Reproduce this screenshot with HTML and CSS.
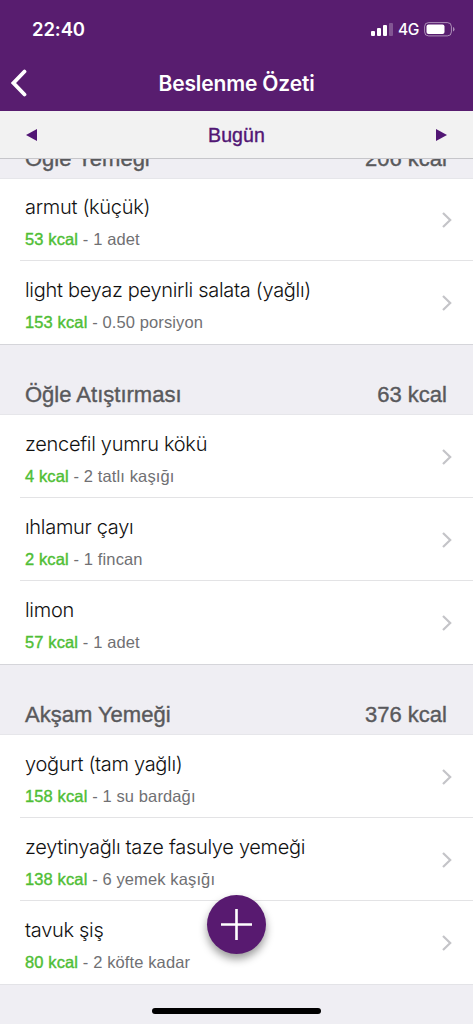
FILE: index.html
```html
<!DOCTYPE html>
<html lang="tr">
<head>
<meta charset="utf-8">
<title>Beslenme Özeti</title>
<link rel="stylesheet" href="styles.css">
</head>
<body>
<svg class="defs" width="0" height="0"><symbol id="chevron" viewBox="0 0 10 16"><path d="M1 1L8.2 8L1 15" fill="none" stroke="#c4c4c8" stroke-width="2.2"/></symbol></svg>
<div class="screen">
  <header class="top">
    <div class="status">
      <span class="time">22:40</span>
      <div class="indicators">
        <svg width="22" height="13" viewBox="0 0 22 13"><g fill="#fff"><rect x="0" y="8" width="4" height="5" rx="1"/><rect x="6" y="5" width="4" height="8" rx="1"/><rect x="12" y="2" width="4" height="11" rx="1"/><rect x="18" y="0" width="4" height="13" rx="1" opacity=".25"/></g></svg>
        <span class="network">4G</span>
        <svg width="31" height="15" viewBox="0 0 31 15"><rect x=".6" y=".6" width="26.8" height="13.3" rx="4" fill="none" stroke="#fff" stroke-opacity=".5"/><rect x="2.5" y="2.4" width="18" height="9.7" rx="2" fill="#fff"/><path d="M29 5q1.5.6 1.5 2.3T29 9.6z" fill="#fff" fill-opacity=".5"/></svg>
      </div>
    </div>
    <div class="nav">
      <svg class="back" width="16" height="28" viewBox="0 0 16 28"><path d="M13.5 2.5L2.5 14L13.5 25.5" fill="none" stroke="#fff" stroke-width="3.8" stroke-linecap="round"/></svg>
      <h1>Beslenme Özeti</h1>
    </div>
  </header>
  <div class="day">
    <svg width="12" height="12"><path d="M0 6L11 0V12z" fill="#511674"/></svg>
    <span>Bugün</span>
    <svg width="12" height="12"><path d="M12 6L1 0V12z" fill="#511674"/></svg>
  </div>
  <main class="list">
    <section>
      <h2 class="meal clipped"><span>Öğle Yemeği</span><span>206 kcal</span></h2>
      <div class="food"><div><p class="name">armut (küçük)</p><p class="info"><b>53 kcal</b> - 1 adet</p></div><svg class="go"><use href="#chevron"/></svg></div>
      <div class="food"><div><p class="name">light beyaz peynirli salata (yağlı)</p><p class="info"><b>153 kcal</b> - 0.50 porsiyon</p></div><svg class="go"><use href="#chevron"/></svg></div>
    </section>
    <section>
      <h2 class="meal"><span>Öğle Atıştırması</span><span>63 kcal</span></h2>
      <div class="food"><div><p class="name">zencefil yumru kökü</p><p class="info"><b>4 kcal</b> - 2 tatlı kaşığı</p></div><svg class="go"><use href="#chevron"/></svg></div>
      <div class="food"><div><p class="name">ıhlamur çayı</p><p class="info"><b>2 kcal</b> - 1 fincan</p></div><svg class="go"><use href="#chevron"/></svg></div>
      <div class="food"><div><p class="name">limon</p><p class="info"><b>57 kcal</b> - 1 adet</p></div><svg class="go"><use href="#chevron"/></svg></div>
    </section>
    <section>
      <h2 class="meal"><span>Akşam Yemeği</span><span>376 kcal</span></h2>
      <div class="food"><div><p class="name">yoğurt (tam yağlı)</p><p class="info"><b>158 kcal</b> - 1 su bardağı</p></div><svg class="go"><use href="#chevron"/></svg></div>
      <div class="food"><div><p class="name">zeytinyağlı taze fasulye yemeği</p><p class="info"><b>138 kcal</b> - 6 yemek kaşığı</p></div><svg class="go"><use href="#chevron"/></svg></div>
      <div class="food"><div><p class="name">tavuk şiş</p><p class="info"><b>80 kcal</b> - 2 köfte kadar</p></div><svg class="go"><use href="#chevron"/></svg></div>
    </section>
  </main>
  <footer class="bottom"><span class="home"></span></footer>
  <button class="add" aria-label="Ekle"><svg width="31" height="31"><path d="M15.5 0V31M0 15.5H31" stroke="#fff" stroke-width="2.6"/></svg></button>
</div>
</body>
</html>
```
FILE: styles.css
```css
* { box-sizing: border-box; }
body, h1, h2, p { margin: 0; }
body { font-family: "Liberation Sans", Arial, sans-serif; background: #efeef3; }
svg { display: block; flex: none; }
.defs { position: absolute; }
.screen { position: relative; display: flex; flex-direction: column; height: 1024px; overflow: hidden; }

.top { height: 111px; background: #581d6f; color: #fff; font-family: Inter, sans-serif; }
.status { display: flex; justify-content: space-between; align-items: center; height: 58px; padding: 0 18px 0 32px; }
.time { font-size: 18.5px; font-weight: 600; letter-spacing: -.1px; }
.indicators { display: flex; align-items: center; gap: 5px; }
.network { font-size: 15.5px; font-weight: 500; letter-spacing: -.4px; }
.nav { display: grid; grid-template-columns: 62px 1fr 62px; align-items: center; height: 50px; }
.back { margin-left: 11px; }
.nav h1 { text-align: center; font-size: 21px; font-weight: 600; letter-spacing: -.15px; white-space: nowrap; }

.day { display: flex; justify-content: space-between; align-items: center; height: 48px; padding: 0 26px 0 26px; background: #f2f2f2; border-bottom: 1px solid #c6c6ca; color: #511674; font-size: 19.5px; letter-spacing: .1px; -webkit-text-stroke: .4px #511674; }
.day span { padding-top: 2px; }

.meal { display: flex; justify-content: space-between; height: 71px; padding: 37px 26px 0 25px; border-top: 1px solid #d5d5da; border-bottom: 1px solid #e6e6ea; background: #efeef3; color: #59595c; font-size: 22px; line-height: 26px; font-weight: 400; -webkit-text-stroke: .4px #59595c; }
.clipped { height: 20px; padding-top: 0; border-top: 0; align-items: flex-end; overflow: hidden; }
.clipped span { margin-bottom: 6px; }
.clipped + .food { height: 82px; }
.clipped + .food .name { padding-top: 14px; }
.food { display: flex; justify-content: space-between; height: 83px; margin-left: 20px; padding: 0 21px 0 5px; border-bottom: 1px solid #e3e3e5; }
section { background: #fff; }
.food:last-child { border-bottom: 0; }
.name { padding-top: 15px; color: #111; font-family: Inter, sans-serif; font-size: 20px; font-weight: 300; letter-spacing: -.3px; line-height: 28px; white-space: nowrap; }
.info { padding-top: 8px; color: #707073; font-size: 16.5px; letter-spacing: .12px; line-height: 20px; white-space: nowrap; }
.info b { color: #4fbe35; font-weight: 400; -webkit-text-stroke: .4px #4fbe35; }
.go { width: 10px; height: 16px; margin-top: 34px; }
.clipped + .food .go { margin-top: 33px; }

.bottom { flex: 1; display: flex; justify-content: center; align-items: flex-end; padding-bottom: 10px; border-top: 1px solid #e3e3e7; }
.home { width: 169px; height: 6px; border-radius: 3px; background: #000; }
.add { position: absolute; left: 207px; top: 895px; display: grid; place-items: center; width: 59px; height: 59px; padding: 0; border: 0; border-radius: 50%; background: #581a70; box-shadow: 0 5px 9px rgba(0,0,0,.4); }
```
